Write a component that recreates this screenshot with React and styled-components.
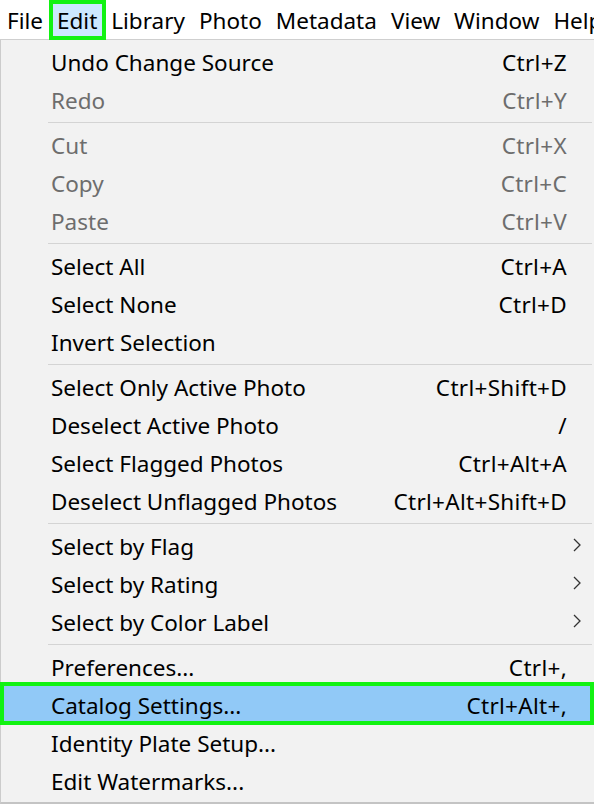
import React from "react";
import styled, { createGlobalStyle } from "styled-components";

const Global = createGlobalStyle`
  html, body { margin: 0; padding: 0; background: #2b2b2b; }
  body { width: 594px; height: 804px; overflow: hidden; font-family: "Noto Sans", "Open Sans", sans-serif; }
`;

const Page = styled.div`
  width: 594px;
  height: 804px;
  display: flex;
  flex-direction: column;
  background: #f2f2f2;
  overflow: hidden;
`;

const MenuBar = styled.div`
  height: 39px;
  background: #ffffff;
  border-bottom: 1px solid #cfcfcf;
  display: flex;
  align-items: stretch;
  white-space: nowrap;
`;

const BarItem = styled.div`
  position: relative;
  display: flex;
  align-items: center;
  padding: 2px 7px 0;
  font-size: 22.5px;
  color: #000;
  background: ${(p) => (p.$active ? "#cce8ff" : "transparent")};
  ${(p) =>
    p.$active &&
    `
    &::after {
      content: "";
      position: absolute;
      left: -1px; right: -2px; top: 0; bottom: -1px;
      border: 4px solid #12f212;
    }
  `}
`;

const Panel = styled.div`
  flex: 1;
  display: flex;
  flex-direction: column;
  padding-top: 3px;
  border-left: 1px solid #cccccc;
  border-bottom: 2px solid #c4c4c4;
`;

const Row = styled.div`
  position: relative;
  height: 38px;
  flex: none;
  display: flex;
  align-items: center;
  padding-left: 50px;
  padding-right: 27px;
  font-size: 22.5px;
  color: ${(p) => (p.$disabled ? "#6d6d6d" : "#000")};
  background: ${(p) => (p.$selected ? "#91c9f7" : "transparent")};
  ${(p) =>
    p.$selected &&
    `
    &::after {
      content: "";
      position: absolute;
      left: -1px; right: 0; top: -4px; bottom: -1px;
      border: 4px solid #12f212;
    }
  `}
`;

const Label = styled.span`
  flex: 1;
  white-space: nowrap;
`;

const Shortcut = styled.span`
  white-space: nowrap;
  letter-spacing: 0.3px;
`;

const Arrow = styled.span`
  position: absolute;
  right: 12px;
  top: 10px;
  display: flex;
`;

const Separator = styled.div`
  height: 7px;
  flex: none;
  display: flex;
  align-items: center;
  padding-left: 47px;
  padding-right: 2px;
  &::before {
    content: "";
    flex: 1;
    height: 1px;
    background: #d4d4d4;
  }
`;

const menu = [
  [
    { label: "Undo Change Source", key: "Ctrl+Z" },
    { label: "Redo", key: "Ctrl+Y", disabled: true },
  ],
  [
    { label: "Cut", key: "Ctrl+X", disabled: true },
    { label: "Copy", key: "Ctrl+C", disabled: true },
    { label: "Paste", key: "Ctrl+V", disabled: true },
  ],
  [
    { label: "Select All", key: "Ctrl+A" },
    { label: "Select None", key: "Ctrl+D" },
    { label: "Invert Selection" },
  ],
  [
    { label: "Select Only Active Photo", key: "Ctrl+Shift+D" },
    { label: "Deselect Active Photo", key: "/" },
    { label: "Select Flagged Photos", key: "Ctrl+Alt+A" },
    { label: "Deselect Unflagged Photos", key: "Ctrl+Alt+Shift+D" },
  ],
  [
    { label: "Select by Flag", sub: true },
    { label: "Select by Rating", sub: true },
    { label: "Select by Color Label", sub: true },
  ],
  [
    { label: "Preferences...", key: "Ctrl+," },
    { label: "Catalog Settings...", key: "Ctrl+Alt+,", selected: true },
    { label: "Identity Plate Setup..." },
    { label: "Edit Watermarks..." },
  ],
];

const bar = ["File", "Edit", "Library", "Photo", "Metadata", "View", "Window", "Help"];

const Chevron = () => (
  <svg width="10" height="16" viewBox="0 0 10 16">
    <path d="M2 2 L8 8 L2 14" fill="none" stroke="#333" strokeWidth="1.3" />
  </svg>
);

export default function App() {
  return (
    <>
      <Global />
      <Page>
        <MenuBar>
          {bar.map((b) => (
            <BarItem key={b} $active={b === "Edit"}>
              {b}
            </BarItem>
          ))}
        </MenuBar>
        <Panel>
          {menu.map((group, gi) => (
            <React.Fragment key={gi}>
              {gi > 0 && <Separator />}
              {group.map((it) => (
                <Row key={it.label} $disabled={it.disabled} $selected={it.selected}>
                  <Label>{it.label}</Label>
                  {it.key && <Shortcut>{it.key}</Shortcut>}
                  {it.sub && (
                    <Arrow>
                      <Chevron />
                    </Arrow>
                  )}
                </Row>
              ))}
            </React.Fragment>
          ))}
        </Panel>
      </Page>
    </>
  );
}
